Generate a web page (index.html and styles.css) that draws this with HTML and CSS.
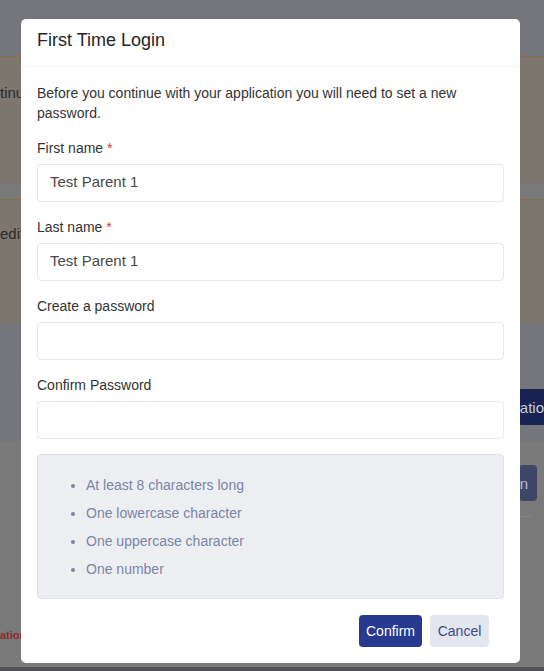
FILE: index.html
```html
<!DOCTYPE html>
<html lang="en">
<head>
<meta charset="utf-8">
<title>First Time Login</title>
<link rel="stylesheet" href="styles.css">
</head>
<body>
<div class="page">
  <div class="topbar"></div>
  <div class="alert alert-one"><span class="bg-text">tinu</span></div>
  <div class="alert alert-two"><span class="bg-text">edit</span></div>
  <div class="actions">
    <span class="bg-btn bg-btn-navy">atio</span>
  </div>
  <div class="lower">
    <div class="lower-row">
      <span class="bg-btn bg-btn-muted">n</span>
    </div>
    <div class="lower-rule"></div>
    <div class="lower-note"><span class="bg-red">ation</span></div>
  </div>
  <div class="bottombar"></div>
</div>

<div class="modal" role="dialog" aria-labelledby="modal-title">
  <div class="modal-header">
    <h2 id="modal-title" class="modal-title">First Time Login</h2>
  </div>
  <div class="modal-body">
    <p class="intro">Before you continue with your application you will need to set a new password.</p>
    <div class="field">
      <label class="field-label">First name <span class="req">*</span></label>
      <input class="field-input" type="text" value="Test Parent 1">
    </div>
    <div class="field">
      <label class="field-label">Last name <span class="req">*</span></label>
      <input class="field-input" type="text" value="Test Parent 1">
    </div>
    <div class="field">
      <label class="field-label">Create a password</label>
      <input class="field-input" type="password">
    </div>
    <div class="field">
      <label class="field-label">Confirm Password</label>
      <input class="field-input" type="password">
    </div>
    <div class="rules">
      <ul class="rules-list">
        <li>At least 8 characters long</li>
        <li>One lowercase character</li>
        <li>One uppercase character</li>
        <li>One number</li>
      </ul>
    </div>
  </div>
  <div class="modal-footer">
    <button class="btn btn-primary" type="button">Confirm</button>
    <button class="btn btn-secondary" type="button">Cancel</button>
  </div>
</div>
</body>
</html>
```

FILE: styles.css
```css
* { box-sizing: border-box; }

html, body {
  margin: 0;
  padding: 0;
  height: 100%;
  overflow: hidden;
}

body {
  font-family: "Liberation Sans", Arial, sans-serif;
  color: #333;
  background: #7a7a7a;
}

/* background page (already dimmed by the overlay) */
.page {
  display: flex;
  flex-direction: column;
  height: 671px;
}

.topbar {
  height: 56px;
  background: #75767b;
}

.alert {
  background: #7c766f;
  border-top: 1px solid #8c6e45;
  display: flex;
  align-items: center;
}

.alert-one {
  height: 127px;
  padding-bottom: 56px;
}

.alert-two {
  margin-top: 16px;
  height: 124px;
  padding-bottom: 57px;
}

.bg-text {
  font-size: 15px;
  color: #2c2c2c;
  white-space: nowrap;
}

.actions {
  height: 118px;
  background: #75767b;
  display: flex;
  justify-content: flex-end;
  padding-top: 66px;
}

.bg-btn {
  display: inline-flex;
  align-items: center;
  height: 36px;
  font-size: 15px;
  border-radius: 4px;
  white-space: nowrap;
}

.bg-btn-navy {
  background: #182253;
  color: #c9cbd6;
  padding: 0 0 0 2px;
  border-radius: 4px 0 0 4px;
}

.lower {
  flex: 1;
  background: #7a7a7a;
  display: flex;
  flex-direction: column;
}

.lower-row {
  display: flex;
  justify-content: flex-end;
  padding: 24px 7px 0 0;
}

.bg-btn-muted {
  background: #3f4566;
  color: #b9bccb;
  padding: 0 9px 0 1px;
}

.lower-rule {
  margin: 15px 12px 0 auto;
  width: 30px;
  border-top: 1px solid #858585;
}

.lower-note {
  margin-top: 112px;
}

.bg-red {
  display: block;
  font-size: 11px;
  font-weight: bold;
  color: #8a2b2b;
  white-space: nowrap;
}

.bottombar {
  height: 4px;
  background: #505257;
}

/* modal */
.modal {
  position: absolute;
  left: 21px;
  top: 19px;
  width: 499px;
  background: #fff;
  border-radius: 5px;
}

.modal-header {
  height: 48px;
  padding: 0 16px;
  border-bottom: 1px solid #eef3f4;
  display: flex;
  align-items: center;
}

.modal-title {
  margin: 0 0 4px;
  font-size: 18px;
  font-weight: normal;
  color: #262626;
}

.modal-body {
  padding: 16px 16px 0;
}

.intro {
  margin: 0 0 15px;
  font-size: 14px;
  line-height: 20px;
  color: #333;
}

.field {
  display: flex;
  flex-direction: column;
  gap: 6px;
  margin-bottom: 15px;
}

.field-label {
  font-size: 14px;
  line-height: 20px;
  color: #333;
}

.req {
  color: #e53935;
}

.field-input {
  height: 38px;
  width: 100%;
  border: 1px solid #e1e8ee;
  border-radius: 4px;
  padding: 0 12px 3px;
  font-family: "Liberation Sans", Arial, sans-serif;
  font-size: 15px;
  color: #484848;
  background: #fff;
  outline: none;
}

.rules {
  background: #edeef2;
  border: 1px solid #dde1ea;
  border-radius: 4px;
  padding: 20px 8px 19px;
}

.rules-list {
  margin: 0;
  padding-left: 40px;
  display: flex;
  flex-direction: column;
  gap: 8px;
  font-size: 14px;
  line-height: 20px;
  color: #7a86a7;
}

.modal-footer {
  display: flex;
  justify-content: flex-end;
  gap: 8px;
  padding: 16px 31px 16px 16px;
}

.btn {
  height: 32px;
  border: 0;
  border-radius: 4px;
  font-family: "Liberation Sans", Arial, sans-serif;
  font-size: 14px;
  cursor: pointer;
}

.btn-primary {
  background: #273a8f;
  color: #fff;
  width: 63px;
  padding: 0;
}

.btn-secondary {
  background: #e3e6ee;
  color: #3d4b8c;
  width: 59px;
  padding: 0;
}
```
